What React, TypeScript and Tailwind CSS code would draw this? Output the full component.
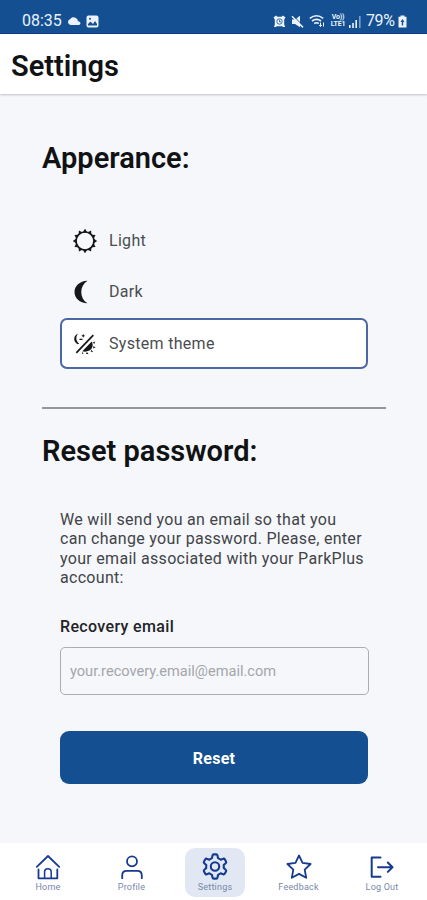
import React, { useState } from 'react';

const THEMES = [
  { id: 'light', label: 'Light' },
  { id: 'dark', label: 'Dark' },
  { id: 'system', label: 'System theme' },
];

const NAV_ITEMS = ['Home', 'Profile', 'Settings', 'Feedback', 'Log Out'];

const SUN_RAYS = [0, 30, 60, 90, 120, 150, 180, 210, 240, 270, 300, 330];

const ThemeIcon: React.FC<{ id: string }> = ({ id }) => {
  if (id === 'light') {
    return (
      <svg viewBox="0 0 26 26" className="h-[26px] w-[26px] text-[#15171a]">
        <circle cx="13" cy="13" r="9" fill="none" stroke="currentColor" strokeWidth="1.700" />
        {SUN_RAYS.map((angle) => (
          <path key={angle} d="M10.600 4.500L13 .8 15.400 4.500z" fill="currentColor" transform={`rotate(${angle} 13 13)`} />
        ))}
      </svg>
    );
  }
  if (id === 'dark') {
    return (
      <svg viewBox="0 0 26 26" className="h-[26px] w-[26px] text-[#15171a]">
        <path d="M15.500 1.700C7.500 2 2.500 7 2.500 13s5 11 13 11.300C7.200 19.500 7.200 6.500 15.500 1.700z" fill="currentColor" />
      </svg>
    );
  }
  return (
    <svg viewBox="0 0 26 26" className="h-[26px] w-[26px] text-[#15171a]">
      <path d="M4.300 21.800L21.300 4.200" stroke="currentColor" strokeWidth="1.700" fill="none" />
      <path d="M6 2.800C1.200 4.200.9 10.800 5.600 13.200l1.700-.6C3.900 10.500 3.400 6 6 2.800z" fill="currentColor" />
      <path d="M11.200 2.800l.6 1.400 1.400.6-1.400.6-.6 1.400-.6-1.400-1.400-.6 1.400-.6zM7.500 7.700h3v1.300h-3z" fill="currentColor" />
      <path d="M10.300 20.300l9.400-9.700c2 3.600.9 7.300-2.300 9-2.300 1.200-4.800 1.400-7.100.7z" fill="currentColor" />
      <path d="M20.800 11.200l2.400-.6-1 2.300zM21.300 15.200l2.400 1-2.500 1.200zM19.300 18.800l2 2.500-2.700-.7zM15 21l1.600 2.300-2.800-.6zM10.600 21l1 1.200-2 1z" fill="currentColor" />
    </svg>
  );
};

const NavIcon: React.FC<{ name: string }> = ({ name }) => (
  <svg
    viewBox="0 0 28 28"
    className="h-7 w-7 shrink-0 text-[#153b8f]"
    fill="none"
    stroke="currentColor"
    strokeWidth="1.800"
    strokeLinecap="round"
    strokeLinejoin="round"
  >
    {name === 'Home' && (
      <>
        <path d="M2.800 13.800L14 3l11.200 10.800M4.500 16.500v8.800h18.800v-8.800" />
        <path d="M10.600 25.300v-6.500c0-2 1.300-3 3.300-3s3.300 1 3.300 3v6.500" strokeWidth="1.500" />
      </>
    )}
    {name === 'Profile' && (
      <>
        <circle cx="14" cy="8.300" r="5" />
        <path d="M4.200 25.200v-2.800c0-2.700 1.800-4.500 4.500-4.500h10.600c2.700 0 4.500 1.800 4.500 4.500v2.800" />
      </>
    )}
    {name === 'Settings' && (
      <>
        <path strokeWidth="2.100" d="M11.500 2.500q.2-1.100 1.300-1.100h2.400q1.100 0 1.300 1.100l.5 2.600q1.500.6 2.700 1.600l2.500-.9q1-.4 1.600.6l1.200 2.100q.6 1-.3 1.700l-2 1.800q.3 1.500 0 3l2 1.800q.9.700.3 1.700l-1.200 2.100q-.6 1-1.600.6l-2.500-.9q-1.200 1-2.700 1.600l-.5 2.600q-.2 1.100-1.300 1.100h-2.400q-1.100 0-1.300-1.100l-.5-2.600q-1.500-.6-2.700-1.600l-2.500.9q-1 .4-1.600-.6L3 18.500q-.6-1 .3-1.700l2-1.800q-.3-1.500 0-3l-2-1.800Q2.400 9.500 3 8.500l1.200-2.100q.6-1 1.600-.6l2.500.9q1.200-1 2.700-1.600z" />
        <circle cx="14" cy="13.500" r="4.200" strokeWidth="2.100" />
      </>
    )}
    {name === 'Feedback' && (
      <path d="M14 2.500l3.500 7.400 8.100 1.100-5.900 5.700 1.500 8.100L14 20.900l-7.200 3.900 1.500-8.100L2.400 11l8.100-1.100z" />
    )}
    {name === 'Log Out' && <path d="M12.500 4.500H3.700v19.300h8.800M10 14.200h14.500M19.800 9.500l4.700 4.700-4.700 4.700" strokeWidth="2" />}
  </svg>
);

const StatusBar: React.FC = () => (
  <div className="flex h-[34px] shrink-0 items-center justify-between border-b border-[#11378c] bg-[#144f92] pt-[9px] pr-5 pl-[22px] text-[#eaf3ff]">
    <div className="flex items-center">
      <span className="w-10 text-[16px] leading-5">08:35</span>
      <svg viewBox="0 0 14 10" className="ml-[5px] h-2.5 w-[14px]" fill="currentColor">
        <path d="M3.500 9A3 3 0 0 1 3 3.200 4 4 0 0 1 8.800 2a3.600 3.600 0 0 1 2.200 3.200C14 5.200 14.300 9 11.500 9z" />
      </svg>
      <svg viewBox="0 0 13 13" className="ml-[5px] h-[13px] w-[13px]">
        <rect x=".5" y=".5" width="12" height="12" rx="2" fill="currentColor" />
        <path d="M2 10.500V9l2.500-2.500L7 9l2-3 2 3v1.500z" fill="#144f92" />
        <circle cx="4" cy="3.700" r="1" fill="#144f92" />
      </svg>
    </div>
    <div className="flex items-center">
      <svg viewBox="0 0 13 13" className="h-[13px] w-[13px]">
        <path d="M.5 2.500L3 .5l1.500 1.300h4L10 .5l2.500 2-1.300 2v5l1 2.500h-2L9 11.200H4L2.800 12H1l.8-2.500v-5z" fill="currentColor" />
        <circle cx="6.500" cy="6.500" r="2.700" fill="none" stroke="#144f92" strokeWidth=".8" />
        <path d="M6.500 4.800v2h1.500" fill="none" stroke="#144f92" strokeWidth=".8" />
      </svg>
      <svg viewBox="0 0 13 13" className="ml-[5px] h-[13px] w-[13px]">
        <path d="M1 4.500h3L9 .7v11.600L4 9H1z" fill="currentColor" />
        <path d="M2.800 1L13 12.200" stroke="#144f92" strokeWidth="1" />
        <path d="M1 1.200l11 11.200" stroke="currentColor" strokeWidth="1.500" />
      </svg>
      <svg viewBox="0 0 16 14" className="ml-[5px] h-[14px] w-4" fill="none" stroke="currentColor">
        <path d="M.8 4.300q6.700-5 13.400 0M3 7q4.500-3.300 9 0M5.200 9.500q2.300-1.600 4.600 0" strokeWidth="1.600" />
        <path d="M11.500 8.500v4M10.200 11l1.300 1.500 1.300-1.500M14.500 12.500v-4" strokeWidth="1" />
      </svg>
      <div className="ml-[5px] flex w-4 flex-col items-center text-[7px] leading-[7px] font-bold tracking-[-0.200px]">
        <span>Vo))</span>
        <span>LTE1</span>
      </div>
      <svg viewBox="0 0 12 12" className="mt-px ml-[3px] h-3 w-3" fill="currentColor">
        <path d="M0 9h1.600v3H0zM3.200 7h1.600v5H3.200zM6.400 4H8v8H6.400z" />
        <path d="M10 0h1.600v12H10z" opacity=".5" />
      </svg>
      <span className="ml-[5px] w-8 text-[16px] leading-5 tracking-[-0.400px]">79%</span>
      <svg viewBox="0 0 9 13" className="h-[13px] w-[9px]">
        <path d="M2.500.5h4v1.300h2V12.500H.5V1.800h2z" fill="currentColor" />
        <path d="M4.500 4L2.500 7h1.300v3.500h1.400V7h1.300z" fill="#144f92" />
      </svg>
    </div>
  </div>
);

const App: React.FC = () => {
  const [theme, setTheme] = useState('system');

  return (
    <div className="flex h-[900px] w-full flex-col overflow-hidden bg-[#f5f7fb] font-[Roboto,sans-serif] text-[#101214]">
      <StatusBar />

      <header className="flex h-[60px] shrink-0 items-center bg-white pt-[3px] pl-[11px] shadow-[0_1px_2px_rgba(0,0,0,0.22)]">
        <h1 className="text-[29px] leading-8 font-semibold">Settings</h1>
      </header>

      <main className="flex flex-1 flex-col pr-[41px] pl-[42px]">
        <section>
          <h2 className="mt-12 text-[29px] leading-8 font-semibold">Apperance:</h2>
          <div className="mt-[41px] flex flex-col pr-[18px] pl-[18px]">
            {THEMES.map(({ id, label }) => (
              <button
                key={id}
                onClick={() => setTheme(id)}
                className={`flex h-[51px] items-center rounded-[7px] border-2 pl-[10px] text-left text-[16px] tracking-[0.300px] text-[#4b4d51] ${theme === id ? 'border-[#4a69a4] bg-white' : 'mb-[0.500px] border-transparent'}`}
              >
                <ThemeIcon id={id} />
                <span className="ml-[11px]">{label}</span>
              </button>
            ))}
          </div>
        </section>

        <hr className="mt-[38px] border-t-2 border-[#96979a]" />

        <section>
          <h2 className="mt-[26px] text-[29px] leading-8 font-semibold">Reset password:</h2>
          <form className="mt-[42.500px] flex flex-col pr-[17px] pl-[18px]" onSubmit={(e) => e.preventDefault()}>
            <p className="text-[16px] leading-[19.500px] tracking-[0.300px] text-[#424448]">
              We will send you an email so that you<br />
              can change your password. Please, enter<br />
              your email associated with your ParkPlus<br />
              account:
            </p>
            <label htmlFor="email" className="mt-[29.500px] text-[16px] leading-5 font-medium tracking-[0.350px] text-[#222427]">
              Recovery email
            </label>
            <input
              id="email"
              type="email"
              placeholder="your.recovery.email@email.com"
              className="mt-[10px] h-12 rounded-[5px] border border-[#abadb1] px-[9px] text-[14.600px] placeholder:text-[#a4a6aa]"
            />
            <button className="mt-9 mr-px h-[53px] rounded-[9px] bg-[#144f92] pt-[2px] text-[16px] font-bold tracking-[0.300px] text-white">
              Reset
            </button>
          </form>
        </section>
      </main>

      <nav className="flex h-[57px] shrink-0 justify-between bg-white pt-[5px] pr-[15px] pl-[18px]">
        {NAV_ITEMS.map((name) => (
          <button
            key={name}
            className={`flex h-[49px] w-[60px] flex-col items-center rounded-[10px] pt-[5px] ${name === 'Settings' ? 'bg-[#e1e8f4]' : ''}`}
          >
            <NavIcon name={name} />
            <span className="mt-px text-[9px] leading-[10px] tracking-[0.200px] text-[#7787a9]">{name}</span>
          </button>
        ))}
      </nav>
    </div>
  );
};

export default App;
